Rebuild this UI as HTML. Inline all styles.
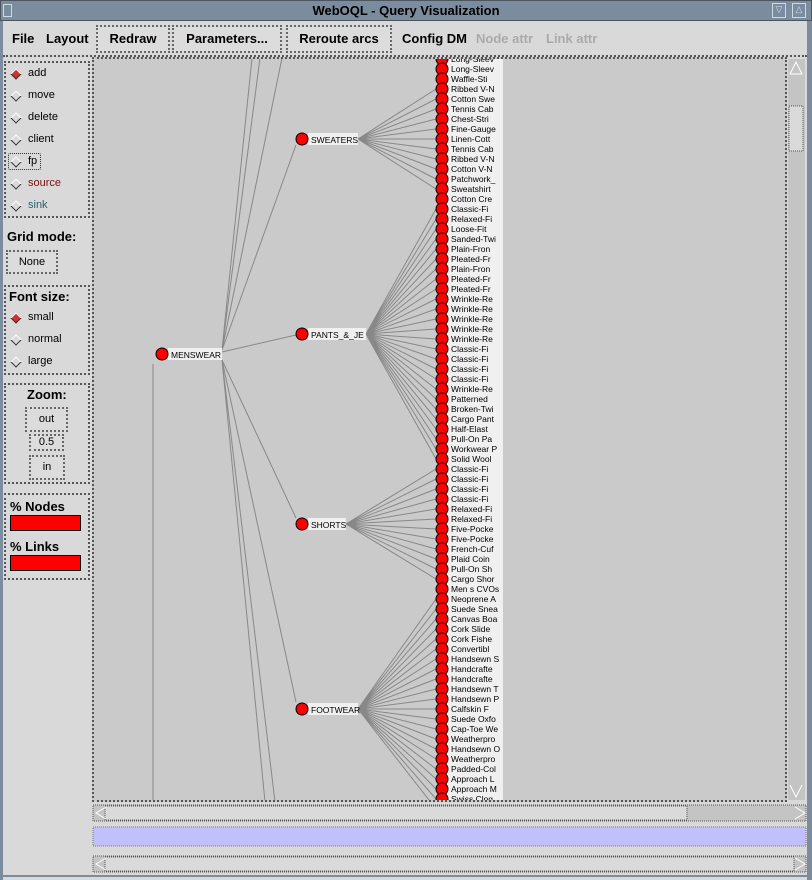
<!DOCTYPE html>
<html><head><meta charset="utf-8"><style>
*{margin:0;padding:0;box-sizing:border-box}
body{width:812px;height:880px;background:#d9d9d9;font-family:"Liberation Sans",sans-serif;position:relative;overflow:hidden}
.abs{position:absolute}
.title{left:0;top:0;width:812px;height:21px;background:#7b8c9e;border:1px solid #4a5560;color:#000;font-size:13px;font-weight:bold;text-align:center;line-height:20px}
.dot{border:2px dotted #555}
.menu{font-size:13px;font-weight:bold;color:#000;top:31px}
.btn{border:2px dotted #666;background:#dcdcdc;font-size:13px;font-weight:bold;text-align:center}
.lp{font-size:11px;color:#000}
.rad{width:8px;height:8px;transform:rotate(45deg);border-left:1px solid #fff;border-top:1px solid #fff;border-right:1px solid #333;border-bottom:1px solid #333;position:absolute}
.h{font-size:13px;font-weight:bold}
</style></head><body>
<div class="abs title">WebOQL - Query Visualization</div>
<div class="abs" style="left:3px;top:4px;width:9px;height:13px;border:1px solid #cdd"></div>
<div class="abs" style="left:772px;top:3px;width:14px;height:15px;border:1px solid #cdd;color:#dde;font-size:9px;text-align:center">▽</div>
<div class="abs" style="left:792px;top:3px;width:14px;height:15px;border:1px solid #cdd;color:#dde;font-size:9px;text-align:center">△</div>
<div class="abs" style="left:0;top:21px;width:3px;height:859px;background:#7b8c9e"></div>
<div class="abs" style="left:807px;top:21px;width:5px;height:859px;background:#7b8c9e"></div>

<div class="abs menu" style="left:12px">File</div>
<div class="abs menu" style="left:46px">Layout</div>
<div class="abs btn" style="left:96px;top:25px;width:74px;height:28px;line-height:24px">Redraw</div>
<div class="abs btn" style="left:172px;top:25px;width:110px;height:28px;line-height:24px">Parameters...</div>
<div class="abs btn" style="left:286px;top:25px;width:106px;height:28px;line-height:24px">Reroute arcs</div>
<div class="abs menu" style="left:402px">Config DM</div>
<div class="abs menu" style="left:476px;color:#aaa">Node attr</div>
<div class="abs menu" style="left:546px;color:#aaa">Link attr</div>
<div class="abs" style="left:3px;top:55px;width:804px;height:2px;border-top:2px dotted #555"></div>

<!-- left panel -->
<div class="abs dot" style="left:4px;top:61px;width:86px;height:157px"></div>
<div class="abs rad" style="left:12px;top:70px;background:#c33"></div><div class="abs lp" style="left:28px;top:67px">add</div>
<div class="abs rad" style="left:12px;top:92px"></div><div class="abs lp" style="left:28px;top:89px">move</div>
<div class="abs rad" style="left:12px;top:114px"></div><div class="abs lp" style="left:28px;top:111px">delete</div>
<div class="abs rad" style="left:12px;top:136px"></div><div class="abs lp" style="left:28px;top:133px">client</div>
<div class="abs" style="left:8px;top:153px;width:33px;height:17px;border:1px dotted #333;border-radius:2px"></div>
<div class="abs rad" style="left:12px;top:158px"></div><div class="abs lp" style="left:28px;top:155px">fp</div>
<div class="abs rad" style="left:12px;top:180px"></div><div class="abs lp" style="left:28px;top:177px;color:#7a1010">source</div>
<div class="abs rad" style="left:12px;top:202px"></div><div class="abs lp" style="left:28px;top:199px;color:#2b6068">sink</div>
<div class="abs h" style="left:7px;top:229px">Grid mode:</div>
<div class="abs btn" style="left:6px;top:250px;width:52px;height:24px;line-height:20px;font-weight:normal;font-size:11px">None</div>
<div class="abs dot" style="left:4px;top:285px;width:86px;height:90px"></div>
<div class="abs h" style="left:9px;top:289px">Font size:</div>
<div class="abs rad" style="left:12px;top:314px;background:#c33"></div><div class="abs lp" style="left:28px;top:311px">small</div>
<div class="abs rad" style="left:12px;top:336px"></div><div class="abs lp" style="left:28px;top:333px">normal</div>
<div class="abs rad" style="left:12px;top:358px"></div><div class="abs lp" style="left:28px;top:355px">large</div>
<div class="abs dot" style="left:4px;top:383px;width:86px;height:101px"></div>
<div class="abs h" style="left:27px;top:387px">Zoom:</div>
<div class="abs btn" style="left:25px;top:407px;width:43px;height:25px;line-height:21px;font-weight:normal;font-size:11px">out</div>
<div class="abs btn" style="left:29px;top:434px;width:35px;height:17px;line-height:13px;font-weight:normal;font-size:11px">0.5</div>
<div class="abs btn" style="left:29px;top:455px;width:36px;height:25px;line-height:21px;font-weight:normal;font-size:11px">in</div>
<div class="abs dot" style="left:4px;top:493px;width:86px;height:87px"></div>
<div class="abs h" style="left:10px;top:499px">% Nodes</div>
<div class="abs" style="left:10px;top:515px;width:71px;height:16px;background:#f00;border:1px solid #000"></div>
<div class="abs h" style="left:10px;top:539px">% Links</div>
<div class="abs" style="left:10px;top:555px;width:71px;height:16px;background:#f00;border:1px solid #000"></div>

<!-- canvas -->
<div class="abs" style="left:92px;top:57px;width:695px;height:745px;border:2px dotted #555;background:#cacaca"></div>
<svg class="abs" style="left:0;top:0" width="812" height="880">
<defs><clipPath id="c"><rect x="94" y="59" width="691" height="741"/></clipPath>
<circle id="n" r="6" fill="#f00" stroke="#000" stroke-width="1"/></defs>
<g clip-path="url(#c)" font-family="Liberation Sans, sans-serif" font-size="8.5">
<g stroke="#888" stroke-width="1" fill="none">
<path d="M222 350L252 58M222 350L260 58M222 350L282 58M222 360L265 802M222 360L275 802M153 802L153 364M222 350L296 145M222 352L296 335M222 360L296 518M222 360L296 702"/>
<path d="M358 139L436 89M358 139L436 99M358 139L436 109M358 139L436 119M358 139L436 129M358 139L436 139M358 139L436 149M358 139L436 159M358 139L436 169M358 139L436 179M358 139L436 189"/>
<path d="M366 334L436 209M366 334L436 219M366 334L436 229M366 334L436 239M366 334L436 249M366 334L436 259M366 334L436 269M366 334L436 279M366 334L436 289M366 334L436 299M366 334L436 309M366 334L436 319M366 334L436 329M366 334L436 339M366 334L436 349M366 334L436 359M366 334L436 369M366 334L436 379M366 334L436 389M366 334L436 399M366 334L436 409M366 334L436 419M366 334L436 429M366 334L436 439M366 334L436 449M366 334L436 459"/>
<path d="M346 524L436 469M346 524L436 479M346 524L436 489M346 524L436 499M346 524L436 509M346 524L436 519M346 524L436 529M346 524L436 539M346 524L436 549M346 524L436 559M346 524L436 569M346 524L436 579"/>
<path d="M358 709L436 599M358 709L436 609M358 709L436 619M358 709L436 629M358 709L436 639M358 709L436 649M358 709L436 659M358 709L436 669M358 709L436 679M358 709L436 689M358 709L436 699M358 709L436 709M358 709L436 719M358 709L436 729M358 709L436 739M358 709L436 749M358 709L436 759M358 709L436 769M358 709L436 779M358 709L436 789M358 709L436 799M358 709L436 809"/>
</g>
<g fill="#f0f0f0">
<rect x="308" y="133" width="50" height="12"/><rect x="308" y="328" width="58" height="12"/><rect x="168" y="348" width="54" height="12"/><rect x="308" y="518" width="38" height="12"/><rect x="308" y="703" width="50" height="12"/>
<rect x="447" y="54" width="56" height="750"/>
</g>
<g fill="#000">
<text x="311" y="143">SWEATERS</text><text x="311" y="338">PANTS_&amp;_JE</text><text x="171" y="358">MENSWEAR</text><text x="311" y="528">SHORTS</text><text x="311" y="713">FOOTWEAR</text>
</g>
<use href="#n" x="302" y="139"/><use href="#n" x="302" y="334"/><use href="#n" x="162" y="354"/><use href="#n" x="302" y="524"/><use href="#n" x="302" y="709"/>
<g>
<use href="#n" x="442" y="59"/><use href="#n" x="442" y="69"/><use href="#n" x="442" y="79"/><use href="#n" x="442" y="89"/><use href="#n" x="442" y="99"/><use href="#n" x="442" y="109"/><use href="#n" x="442" y="119"/><use href="#n" x="442" y="129"/><use href="#n" x="442" y="139"/><use href="#n" x="442" y="149"/><use href="#n" x="442" y="159"/><use href="#n" x="442" y="169"/><use href="#n" x="442" y="179"/><use href="#n" x="442" y="189"/><use href="#n" x="442" y="199"/><use href="#n" x="442" y="209"/><use href="#n" x="442" y="219"/><use href="#n" x="442" y="229"/><use href="#n" x="442" y="239"/><use href="#n" x="442" y="249"/><use href="#n" x="442" y="259"/><use href="#n" x="442" y="269"/><use href="#n" x="442" y="279"/><use href="#n" x="442" y="289"/><use href="#n" x="442" y="299"/><use href="#n" x="442" y="309"/><use href="#n" x="442" y="319"/><use href="#n" x="442" y="329"/><use href="#n" x="442" y="339"/><use href="#n" x="442" y="349"/><use href="#n" x="442" y="359"/><use href="#n" x="442" y="369"/><use href="#n" x="442" y="379"/><use href="#n" x="442" y="389"/><use href="#n" x="442" y="399"/><use href="#n" x="442" y="409"/><use href="#n" x="442" y="419"/><use href="#n" x="442" y="429"/><use href="#n" x="442" y="439"/><use href="#n" x="442" y="449"/><use href="#n" x="442" y="459"/><use href="#n" x="442" y="469"/><use href="#n" x="442" y="479"/><use href="#n" x="442" y="489"/><use href="#n" x="442" y="499"/><use href="#n" x="442" y="509"/><use href="#n" x="442" y="519"/><use href="#n" x="442" y="529"/><use href="#n" x="442" y="539"/><use href="#n" x="442" y="549"/><use href="#n" x="442" y="559"/><use href="#n" x="442" y="569"/><use href="#n" x="442" y="579"/><use href="#n" x="442" y="589"/><use href="#n" x="442" y="599"/><use href="#n" x="442" y="609"/><use href="#n" x="442" y="619"/><use href="#n" x="442" y="629"/><use href="#n" x="442" y="639"/><use href="#n" x="442" y="649"/><use href="#n" x="442" y="659"/><use href="#n" x="442" y="669"/><use href="#n" x="442" y="679"/><use href="#n" x="442" y="689"/><use href="#n" x="442" y="699"/><use href="#n" x="442" y="709"/><use href="#n" x="442" y="719"/><use href="#n" x="442" y="729"/><use href="#n" x="442" y="739"/><use href="#n" x="442" y="749"/><use href="#n" x="442" y="759"/><use href="#n" x="442" y="769"/><use href="#n" x="442" y="779"/><use href="#n" x="442" y="789"/><use href="#n" x="442" y="799"/>
</g>
<g fill="#000">
<text x="451" y="62">Long-Sleev</text><text x="451" y="72">Long-Sleev</text><text x="451" y="82">Waffle-Sti</text><text x="451" y="92">Ribbed V-N</text><text x="451" y="102">Cotton Swe</text><text x="451" y="112">Tennis Cab</text><text x="451" y="122">Chest-Stri</text><text x="451" y="132">Fine-Gauge</text><text x="451" y="142">Linen-Cott</text><text x="451" y="152">Tennis Cab</text><text x="451" y="162">Ribbed V-N</text><text x="451" y="172">Cotton V-N</text><text x="451" y="182">Patchwork_</text><text x="451" y="192">Sweatshirt</text><text x="451" y="202">Cotton Cre</text><text x="451" y="212">Classic-Fi</text><text x="451" y="222">Relaxed-Fi</text><text x="451" y="232">Loose-Fit</text><text x="451" y="242">Sanded-Twi</text><text x="451" y="252">Plain-Fron</text><text x="451" y="262">Pleated-Fr</text><text x="451" y="272">Plain-Fron</text><text x="451" y="282">Pleated-Fr</text><text x="451" y="292">Pleated-Fr</text><text x="451" y="302">Wrinkle-Re</text><text x="451" y="312">Wrinkle-Re</text><text x="451" y="322">Wrinkle-Re</text><text x="451" y="332">Wrinkle-Re</text><text x="451" y="342">Wrinkle-Re</text><text x="451" y="352">Classic-Fi</text><text x="451" y="362">Classic-Fi</text><text x="451" y="372">Classic-Fi</text><text x="451" y="382">Classic-Fi</text><text x="451" y="392">Wrinkle-Re</text><text x="451" y="402">Patterned</text><text x="451" y="412">Broken-Twi</text><text x="451" y="422">Cargo Pant</text><text x="451" y="432">Half-Elast</text><text x="451" y="442">Pull-On Pa</text><text x="451" y="452">Workwear P</text><text x="451" y="462">Solid Wool</text><text x="451" y="472">Classic-Fi</text><text x="451" y="482">Classic-Fi</text><text x="451" y="492">Classic-Fi</text><text x="451" y="502">Classic-Fi</text><text x="451" y="512">Relaxed-Fi</text><text x="451" y="522">Relaxed-Fi</text><text x="451" y="532">Five-Pocke</text><text x="451" y="542">Five-Pocke</text><text x="451" y="552">French-Cuf</text><text x="451" y="562">Plaid Coin</text><text x="451" y="572">Pull-On Sh</text><text x="451" y="582">Cargo Shor</text><text x="451" y="592">Men s CVOs</text><text x="451" y="602">Neoprene A</text><text x="451" y="612">Suede Snea</text><text x="451" y="622">Canvas Boa</text><text x="451" y="632">Cork Slide</text><text x="451" y="642">Cork Fishe</text><text x="451" y="652">Convertibl</text><text x="451" y="662">Handsewn S</text><text x="451" y="672">Handcrafte</text><text x="451" y="682">Handcrafte</text><text x="451" y="692">Handsewn T</text><text x="451" y="702">Handsewn P</text><text x="451" y="712">Calfskin F</text><text x="451" y="722">Suede Oxfo</text><text x="451" y="732">Cap-Toe We</text><text x="451" y="742">Weatherpro</text><text x="451" y="752">Handsewn O</text><text x="451" y="762">Weatherpro</text><text x="451" y="772">Padded-Col</text><text x="451" y="782">Approach L</text><text x="451" y="792">Approach M</text><text x="451" y="802">Swiss Clog</text>
</g>
</g>
<!-- vertical scrollbar -->
<rect x="788" y="59" width="17" height="741" fill="#c4c4c4"/>
<rect x="789" y="106" width="14" height="45" fill="#dadada" stroke="#555" stroke-dasharray="1 1"/>
<path d="M790 74L796 62L802 74Z" fill="none" stroke="#fff"/>
<path d="M790 785L796 797L802 785" fill="none" stroke="#fff"/>
<!-- h scrollbar 1 -->
<rect x="93" y="805" width="713" height="16" fill="#c4c4c4" stroke="#555" stroke-dasharray="1 1"/>
<rect x="105" y="806" width="582" height="14" fill="#dadada" stroke="#555" stroke-dasharray="1 1"/>
<path d="M106 807L96 813L106 819" fill="none" stroke="#fff"/>
<path d="M795 807L805 813L795 819" fill="none" stroke="#fff"/>
<!-- blue bar -->
<rect x="93" y="827" width="713" height="19" fill="#c0c0ff" stroke="#777" stroke-dasharray="1 1"/>
<!-- h scrollbar 2 -->
<rect x="93" y="856" width="713" height="16" fill="#c4c4c4" stroke="#555" stroke-dasharray="1 1"/>
<rect x="105" y="857" width="689" height="14" fill="#dadada" stroke="#555" stroke-dasharray="1 1"/>
<path d="M106 858L96 864L106 870" fill="none" stroke="#fff"/>
<path d="M795 858L805 864L795 870" fill="none" stroke="#fff"/>
<line x1="3" y1="876" x2="807" y2="876" stroke="#7b8c9e" stroke-width="2"/>
</svg>
</body></html>
